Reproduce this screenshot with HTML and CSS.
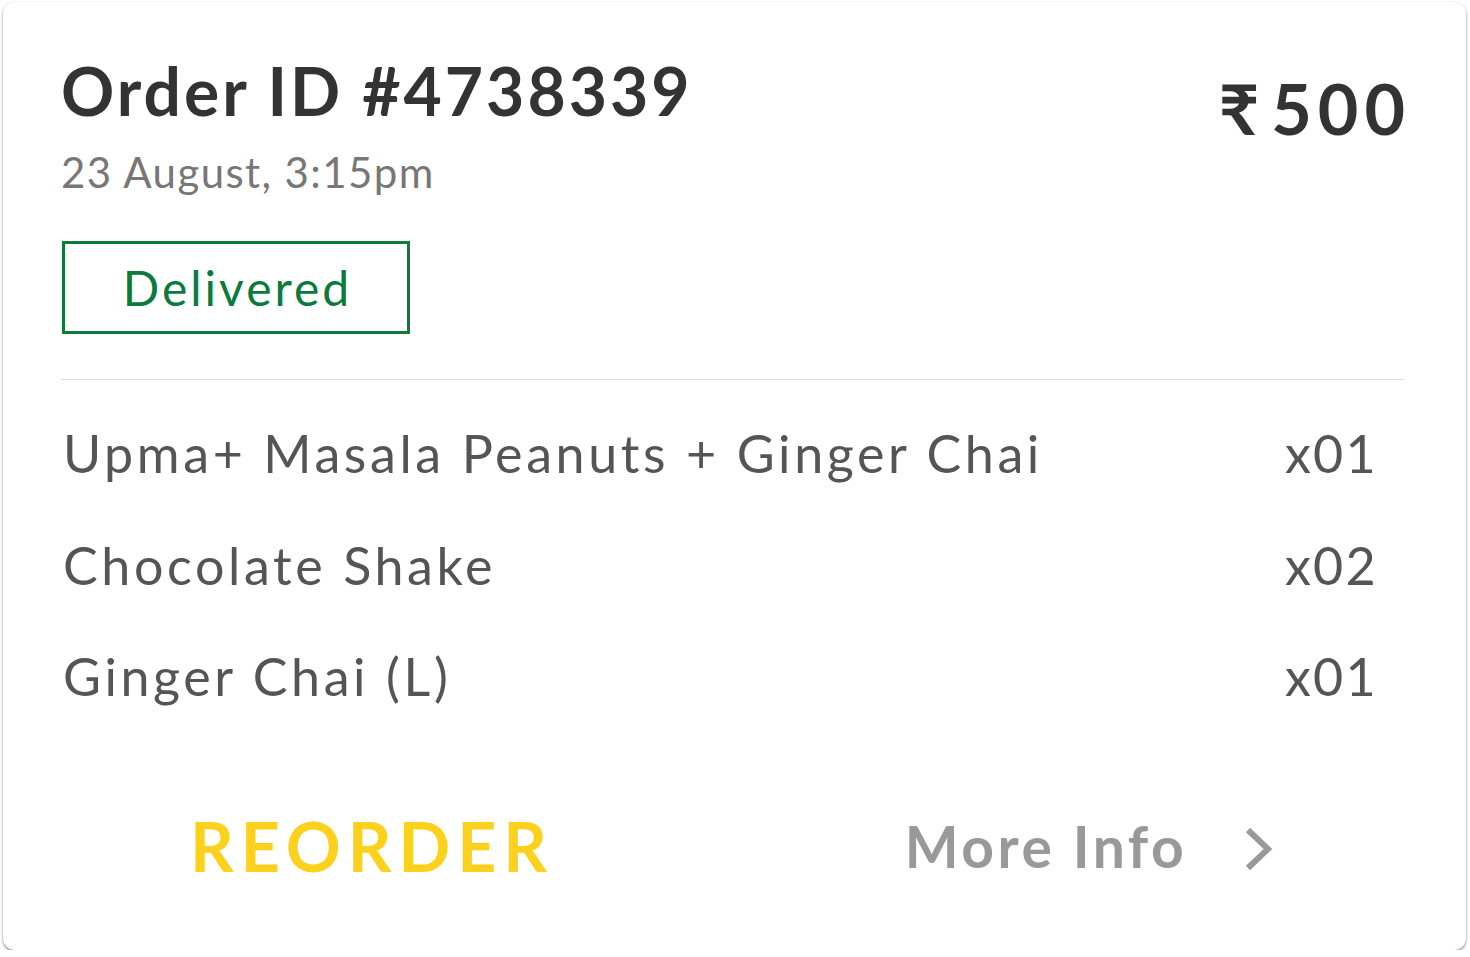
FILE: index.html
```html
<!DOCTYPE html>
<html lang="en">
<head>
<meta charset="utf-8">
<title>Order</title>
<link rel="stylesheet" href="styles.css">
</head>
<body>
<div class="card">
  <div class="head">
    <div class="head-left">
      <div class="title">Order ID #4738339</div>
      <div class="date">23 August, 3:15pm</div>
      <div class="status"><span class="status-text">Delivered</span></div>
    </div>
    <div class="price"><span class="rupee">₹</span>500</div>
  </div>
  <div class="divider"></div>
  <div class="items">
    <div class="item"><span class="name">Upma+ Masala Peanuts + Ginger Chai</span><span class="qty">x01</span></div>
    <div class="item"><span class="name">Chocolate Shake</span><span class="qty">x02</span></div>
    <div class="item"><span class="name">Ginger Chai (L)</span><span class="qty">x01</span></div>
  </div>
  <div class="footer">
    <div class="half half-left"><span class="reorder">REORDER</span></div>
    <div class="half half-right">
      <span class="more">More Info</span>
      <svg class="chev" width="30" height="46" viewBox="0 0 30 46"><polyline points="4,3 24,22 4,41" fill="none" stroke="#999" stroke-width="6"/></svg>
    </div>
  </div>
</div>
</body>
</html>
```

FILE: styles.css
```css
html, body { margin: 0; padding: 0; background: #fff; }
body { font-family: Lato, "Open Sans", sans-serif; }
.card {
  box-sizing: border-box;
  width: 1463px;
  height: 948px;
  margin: 2px 0 0 3px;
  background: #fff;
  border-radius: 12px;
  box-shadow: 0 2px 3px rgba(0,0,0,0.38), 0 0 2px rgba(0,0,0,0.12);
  padding-top: 56px;
}
.head {
  display: flex;
  justify-content: space-between;
  align-items: flex-start;
  padding: 0 61px 0 58px;
}
.title {
  font-size: 66px;
  line-height: 66px;
  font-weight: 700;
  color: #333;
  letter-spacing: 3px;
}
.date {
  margin-top: 27px;
  font-size: 42px;
  line-height: 42px;
  color: #777;
  letter-spacing: 1.4px;
}
.status {
  box-sizing: border-box;
  margin-top: 48px;
  margin-left: 1px;
  width: 348px;
  height: 93px;
  border: 3px solid #0b7a3b;
  color: #0b7a3b;
  font-size: 48px;
  display: flex;
  align-items: center;
  justify-content: center;
}
.status-text {
  letter-spacing: 3px;
  margin-right: -3px;
}
.price {
  margin-top: 15px;
  font-size: 70px;
  line-height: 70px;
  font-weight: 700;
  color: #333;
  letter-spacing: 6px;
  margin-right: -6px;
}
.rupee { letter-spacing: 12px; }
.divider {
  height: 1px;
  background: #ddd;
  margin: 45px 61px 0 58px;
}
.items {
  padding: 47px 61px 0 60px;
  display: flex;
  flex-direction: column;
  gap: 59.5px;
}
.item {
  display: grid;
  grid-template-columns: 1fr 120px;
  font-size: 52px;
  line-height: 52px;
  color: #555;
}
.name { letter-spacing: 3.6px; }
.qty { letter-spacing: 2.2px; }
.footer {
  display: flex;
  margin-top: 110px;
}
.half {
  flex: 1;
  display: flex;
  justify-content: center;
  align-items: center;
}
.half-left { padding-left: 5px; }
.half-right { padding-right: 16px; }
.reorder {
  font-size: 68px;
  line-height: 68px;
  font-weight: 700;
  color: #fcd11e;
  letter-spacing: 7px;
  margin-right: -7px;
}
.more {
  font-size: 57px;
  line-height: 68px;
  font-weight: 700;
  color: #999;
  letter-spacing: 3.5px;
}
.chev { margin-left: 57px; margin-top: 8px; }
```
